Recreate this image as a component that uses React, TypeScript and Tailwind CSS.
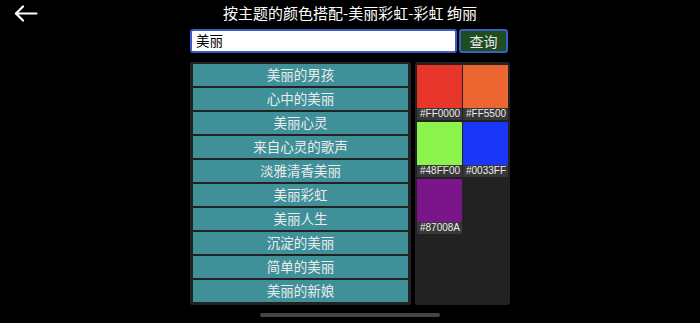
const names = [
  '美丽的男孩',
  '心中的美丽',
  '美丽心灵',
  '来自心灵的歌声',
  '淡雅清香美丽',
  '美丽彩虹',
  '美丽人生',
  '沉淀的美丽',
  '简单的美丽',
  '美丽的新娘',
]

const swatches = [
  { hex: '#FF0000', show: '#e8362a' },
  { hex: '#FF5500', show: '#eb6631' },
  { hex: '#48FF00', show: '#8bf34c' },
  { hex: '#0033FF', show: '#1a36f6' },
  { hex: '#87008A', show: '#7b168a' },
]

const font = "font-['Noto_Sans_CJK_SC','Noto_Sans',sans-serif]"

export default function App() {
  return (
    <div className={`w-[700px] h-[323px] bg-black text-white overflow-hidden relative ${font}`}>
      <header className="grid grid-cols-[1fr_auto_1fr] items-center h-[26px]">
        <div className="pl-[14px]">
          <svg width="24" height="17" viewBox="0 0 24 17" fill="none" stroke="white" strokeWidth="2.2" strokeLinecap="round" strokeLinejoin="round">
            <polyline points="9,1.5 2,8.5 9,15.5" />
            <line x1="2" y1="8.5" x2="22.5" y2="8.5" />
          </svg>
        </div>
        <h1 className="text-[15px] leading-[20px]">按主题的颜色搭配-美丽彩虹-彩虹 绚丽</h1>
        <div />
      </header>

      <div className="w-[320px] mx-auto mt-[3px]">
        <div className="flex gap-[2px] h-[24px]">
          <div className="w-[267px] bg-white border-2 border-[#3b5ec4] rounded-[3px] flex items-center pl-[4px]">
            <span className="text-black text-[13.5px] leading-none">美丽</span>
          </div>
          <button className="w-[49px] bg-[#1f4d22] border-2 border-[#3b5ec4] rounded-[3px] text-[14px] leading-none text-[#e6e6e6]">
            查询
          </button>
        </div>

        <div className="flex gap-[4px] mt-[9px] h-[243px]">
          <div className="w-[221px] bg-[#222] rounded-[2px] pt-[2px] px-[3px] flex flex-col gap-[2px]">
            {names.map((n) => (
              <div key={n} className="h-[22px] bg-[#3f9098] flex items-center justify-center text-[13.5px] leading-none text-[#ececec]">
                {n}
              </div>
            ))}
          </div>
          <div className="w-[95px] bg-[#222] rounded-[3px] pt-[3px] px-[2px]">
            <div className="grid grid-cols-2 gap-x-[1px] gap-y-[2px]">
              {swatches.map((s) => (
                <div key={s.hex}>
                  <div className="h-[43px]" style={{ backgroundColor: s.show }} />
                  <div className="h-[12px] bg-[#383838] text-[10px] leading-[12px] pl-[3px] text-[#ededed] font-['Liberation_Sans',sans-serif] whitespace-nowrap overflow-hidden">
                    {s.hex}
                  </div>
                </div>
              ))}
            </div>
          </div>
        </div>
      </div>

      <div className="absolute left-[260px] top-[313px] w-[180px] h-[4px] rounded-full bg-[#454545]" />
    </div>
  )
}
